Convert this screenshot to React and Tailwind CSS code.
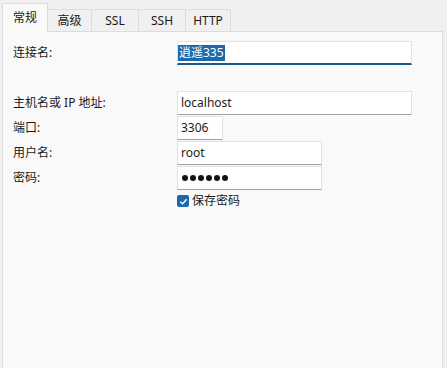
import React from 'react';

const font = { fontFamily: '"Noto Sans", "Noto Sans CJK SC", sans-serif' };

function Row({ label, children, className = '' }) {
  return (
    <div className={`flex items-center ${className}`}>
      <div className="w-[164px] shrink-0 text-[12px] text-[#1a1a1a]">{label}</div>
      {children}
    </div>
  );
}

function Field({ value, width, active }) {
  return (
    <div
      className={`h-[24px] ${width} flex items-center px-[3px] text-[12px] text-[#1a1a1a] bg-white border border-[#e2e2e2] ${
        active ? 'border-b-2 border-b-[#1c5a8c]' : 'border-b-[#a0a0a0]'
      }`}
    >
      {value}
    </div>
  );
}

export default function App() {
  const tabs = ['高级', 'SSL', 'SSH', 'HTTP'];
  return (
    <div className="w-[447px] h-[368px] bg-[#f0f0f0] pt-[2px] overflow-hidden" style={font}>
      <div className="flex items-end h-[29px] pl-[2px]">
        <div className="h-[29px] w-[46px] bg-[#f9f9f9] border border-b-0 border-[#dcdcdc] flex items-center justify-center text-[12px] text-[#1a1a1a] relative top-[1px] z-10">
          常规
        </div>
        {tabs.map((t, i) => (
          <div
            key={t}
            className={`h-[22px] ${i === 0 ? 'w-[44px]' : i === 3 ? 'w-[45px]' : 'w-[47px]'} bg-[#f0f0f0] border border-l-0 border-b-0 border-[#dcdcdc] flex items-center justify-center text-[12px] text-[#1a1a1a]`}
          >
            {t}
          </div>
        ))}
      </div>
      <div className="ml-[2px] w-[441px] h-[340px] bg-[#f9f9f9] border border-[#dcdcdc] pl-[10px] pt-[9px]">
        <Row label="连接名:">
          <Field
            width="w-[235px]"
            active
            value={<span className="bg-[#1a6aad] text-white leading-[16px] px-[1px] -ml-[3px]">逍遥335</span>}
          />
        </Row>
        <Row label="主机名或 IP 地址:" className="mt-[26px]">
          <Field width="w-[235px]" value="localhost" />
        </Row>
        <Row label="端口:" className="mt-[1px]">
          <Field width="w-[46px]" value="3306" />
        </Row>
        <Row label="用户名:" className="mt-[1px]">
          <Field width="w-[145px]" value="root" />
        </Row>
        <Row label="密码:" className="mt-[1px]">
          <Field
            width="w-[145px]"
            value={
              <span className="flex gap-[2px] ml-[1px]">
                {[0, 1, 2, 3, 4, 5].map((d) => (
                  <span key={d} className="w-[6px] h-[6px] rounded-full bg-[#111]" />
                ))}
              </span>
            }
          />
        </Row>
        <div className="flex items-center ml-[164px] mt-[2px] gap-[3px]">
          <div className="w-[12px] h-[12px] bg-[#1a6aad] rounded-[2px] flex items-center justify-center">
            <svg width="9" height="9" viewBox="0 0 10 10" fill="none">
              <path d="M1.5 5.2 L4 7.5 L8.5 2.5" stroke="white" strokeWidth="1.6" />
            </svg>
          </div>
          <span className="text-[12px] text-[#1a1a1a]">保存密码</span>
        </div>
      </div>
    </div>
  );
}
